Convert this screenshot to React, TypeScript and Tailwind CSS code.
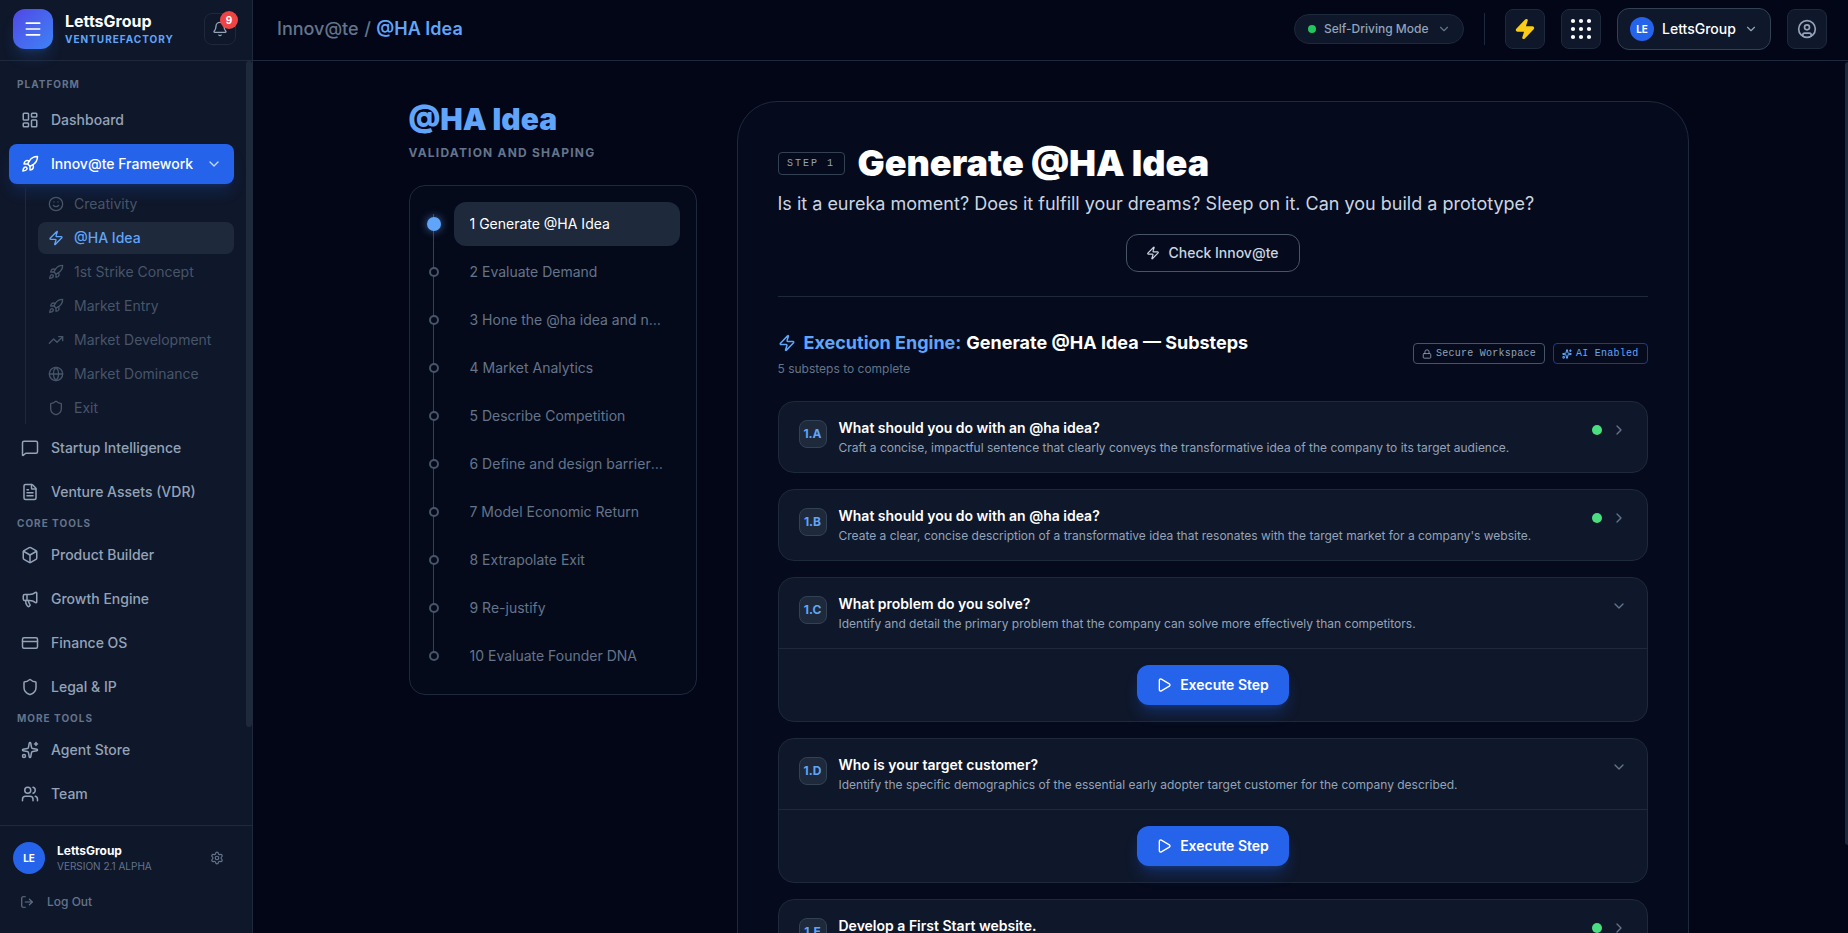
import React from "react";
import {
  LayoutDashboard, Rocket, Smile, Zap, TrendingUp, Globe, Shield, MessageSquare, FileText, Box,
  Megaphone, CreditCard, Sparkles, Users, Settings, LogOut, Bell, Menu, ChevronDown, ChevronRight,
  Play, Lock, CircleUser,
} from "lucide-react";

const sub = [
  { i: Smile, t: "Creativity" },
  { i: Zap, t: "@HA Idea", active: true },
  { i: Rocket, t: "1st Strike Concept" },
  { i: Rocket, t: "Market Entry" },
  { i: TrendingUp, t: "Market Development" },
  { i: Globe, t: "Market Dominance" },
  { i: Shield, t: "Exit" },
];

const steps = [
  "1 Generate @HA Idea", "2 Evaluate Demand", "3 Hone the @ha idea and name", "4 Market Analytics",
  "5 Describe Competition", "6 Define and design barriers to entry", "7 Model Economic Return",
  "8 Extrapolate Exit", "9 Re-justify", "10 Evaluate Founder DNA",
];

const cards = [
  { id: "1.A", t: "What should you do with an @ha idea?", d: "Craft a concise, impactful sentence that clearly conveys the transformative idea of the company to its target audience.", done: true },
  { id: "1.B", t: "What should you do with an @ha idea?", d: "Create a clear, concise description of a transformative idea that resonates with the target market for a company's website.", done: true },
  { id: "1.C", t: "What problem do you solve?", d: "Identify and detail the primary problem that the company can solve more effectively than competitors.", done: false },
  { id: "1.D", t: "Who is your target customer?", d: "Identify the specific demographics of the essential early adopter target customer for the company described.", done: false },
  { id: "1.E", t: "Develop a First Start website.", d: "Build a simple website that presents the idea to the first customers.", done: true },
];

function NavItem({ icon: I, label }: { icon: React.ElementType; label: string }) {
  return (
    <div className="flex h-10 shrink-0 items-center gap-3 rounded-lg px-3 text-sm font-medium text-[#94a3b8]">
      <I size={18} strokeWidth={2} />
      <span>{label}</span>
    </div>
  );
}

function SectionLabel({ children }: { children: React.ReactNode }) {
  return <div className="flex h-[15px] items-center px-2 text-[10px] font-bold tracking-[0.1em] text-[#64748b]">{children}</div>;
}

function Sidebar() {
  return (
    <aside className="flex h-full w-[253px] shrink-0 flex-col border-r border-[#1e293b] bg-[#0f172a]">
      <div className="flex h-[61px] shrink-0 items-center border-b border-[#1e293b] pb-[2px] pl-[13px] pr-4">
        <div className="flex h-10 w-10 items-center justify-center rounded-xl bg-gradient-to-br from-[#4f46e5] to-[#3b82f6] text-white shadow-lg shadow-[#3b82f6]/20">
          <Menu size={20} />
        </div>
        <div className="ml-3 flex-1 leading-none">
          <div className="text-base leading-5 font-bold text-white">LettsGroup</div>
          <div className="text-[10px] leading-4 font-bold tracking-[0.1em] text-[#60a5fa]">VENTUREFACTORY</div>
        </div>
        <div className="relative flex h-8 w-8 items-center justify-center rounded-lg border border-[#1e293b] text-[#94a3b8]">
          <Bell size={16} />
          <span className="absolute -top-[3px] -right-[3px] flex h-[18px] w-[18px] items-center justify-center rounded-full bg-[#ef4444] text-[10px] font-bold text-white">9</span>
        </div>
      </div>
      <div className="relative min-h-0 flex-1 overflow-hidden">
        <div className="absolute top-0 right-0 bottom-[98px] w-[6px] rounded-full bg-[#1e293b]" />
        <nav className="flex flex-col gap-1 pt-[16px] pl-[9px] pr-[18px]">
          <div className="mb-1"><SectionLabel>PLATFORM</SectionLabel></div>
          <NavItem icon={LayoutDashboard} label="Dashboard" />
          <div className="flex h-10 items-center gap-3 rounded-lg bg-[#2563eb] px-3 text-sm font-medium text-white shadow-lg shadow-[#2563eb]/20">
            <Rocket size={18} />
            <span className="flex-1">Innov@te Framework</span>
            <ChevronDown size={16} className="text-[#bfdbfe]" />
          </div>
          <div className="ml-4 flex flex-col gap-[2px] border-l border-[#1e293b] pl-3">
            {sub.map((s) => (
              <div key={s.t} className={`flex h-8 items-center gap-[10px] rounded-lg px-[10px] text-sm ${s.active ? "bg-[#1e293b] font-medium text-[#60a5fa]" : "text-[#475569]"}`}>
                <s.i size={16} />
                <span>{s.t}</span>
              </div>
            ))}
          </div>
          <NavItem icon={MessageSquare} label="Startup Intelligence" />
          <NavItem icon={FileText} label="Venture Assets (VDR)" />
          <SectionLabel>CORE TOOLS</SectionLabel>
          <NavItem icon={Box} label="Product Builder" />
          <NavItem icon={Megaphone} label="Growth Engine" />
          <NavItem icon={CreditCard} label="Finance OS" />
          <NavItem icon={Shield} label="Legal & IP" />
          <SectionLabel>MORE TOOLS</SectionLabel>
          <NavItem icon={Sparkles} label="Agent Store" />
          <NavItem icon={Users} label="Team" />
        </nav>
      </div>
      <div className="h-[108px] shrink-0 border-t border-[#1e293b] pl-[13px] pr-4 pt-4">
        <div className="flex h-8 items-center">
          <div className="flex h-8 w-8 items-center justify-center rounded-full bg-[#2563eb] text-[10px] font-bold text-white">LE</div>
          <div className="ml-3 flex-1">
            <div className="text-xs leading-4 font-bold text-white">LettsGroup</div>
            <div className="text-[10px] leading-[14px] text-[#64748b]">VERSION 2.1 ALPHA</div>
          </div>
          <Settings size={14} className="mr-3 text-[#64748b]" />
        </div>
        <div className="mt-[18px] flex h-5 items-center gap-[13px] pl-[7px] text-xs font-medium text-[#64748b]">
          <LogOut size={14} />
          <span>Log Out</span>
        </div>
      </div>
    </aside>
  );
}

function TopBar() {
  return (
    <header className="flex h-[61px] shrink-0 items-center border-b border-[#1e293b] bg-[#020617] pb-[2px] pl-6 pr-[21px]">
      <div className="flex-1 text-lg font-medium text-[#64748b]">
        Innov@te<span className="mx-[5.5px]">/</span><span className="font-semibold text-[#60a5fa]">@HA Idea</span>
      </div>
      <div className="flex h-[30px] w-[170px] items-center gap-2 rounded-full border border-[#1e293b] bg-[#0f172a] px-[13px] text-xs font-medium whitespace-nowrap text-[#94a3b8]">
        <span className="h-2 w-2 shrink-0 rounded-full bg-[#22c55e]" />
        <span className="flex-1">Self-Driving Mode</span>
        <ChevronDown size={14} className="shrink-0 text-[#64748b]" />
      </div>
      <div className="mx-5 h-8 w-px bg-[#1e293b]" />
      <div className="flex h-10 w-10 items-center justify-center rounded-lg border border-[#1e293b] bg-[#0f172a]">
        <Zap size={22} className="fill-[#facc15] text-[#facc15]" />
      </div>
      <div className="ml-4 flex h-10 w-10 items-center justify-center rounded-lg border border-[#1e293b] bg-[#0f172a]">
        <svg width="22" height="22" viewBox="0 0 22 22" fill="white">
          {[3, 11, 19].flatMap((y) => [3, 11, 19].map((x) => <circle key={`${x}-${y}`} cx={x} cy={y} r="2.1" />))}
        </svg>
      </div>
      <div className="ml-4 flex h-[42px] w-[154px] items-center rounded-xl border border-[#334155] bg-[#0f172a] pl-3 pr-3">
        <div className="flex h-6 w-6 items-center justify-center rounded-full bg-[#2563eb] text-[10px] font-bold text-white">LE</div>
        <span className="ml-2 flex-1 text-sm font-medium text-white">LettsGroup</span>
        <ChevronDown size={14} className="text-[#94a3b8]" />
      </div>
      <div className="ml-4 flex h-10 w-10 items-center justify-center rounded-lg border border-[#1e293b] bg-[#0f172a] text-[#94a3b8]">
        <CircleUser size={20} />
      </div>
    </header>
  );
}

function StepsPanel() {
  return (
    <div className="w-[288px] shrink-0">
      <h2 className="text-3xl leading-9 font-black text-[#60a5fa]">@HA Idea</h2>
      <p className="mt-2 text-xs leading-4 font-bold tracking-widest text-[#64748b]">VALIDATION AND SHAPING</p>
      <div className="relative mt-6 rounded-2xl border border-[#1e293b] bg-[#050a1a] p-4">
        <div className="absolute top-[28px] bottom-[38px] left-[23px] w-px bg-[#334155]" />
        <div className="flex flex-col gap-1">
          {steps.map((s, i) => (
            <div key={s} className="flex items-center gap-3">
              <div className="relative flex w-4 justify-center">
                {i === 0 ? (
                  <span className="h-[14px] w-[14px] rounded-full bg-[#60a5fa] shadow-[0_0_8px_rgba(96,165,250,0.6)]" />
                ) : (
                  <span className="h-[10px] w-[10px] rounded-full border-2 border-[#475569] bg-[#050a1a]" />
                )}
              </div>
              <div className={`flex h-11 min-w-0 flex-1 items-center rounded-xl px-4 text-sm ${i === 0 ? "bg-[#1e293b] text-white" : "text-[#64748b]"}`}>
                <span className="truncate">{s}</span>
              </div>
            </div>
          ))}
        </div>
      </div>
    </div>
  );
}

function SubCard({ c }: { c: (typeof cards)[number] }) {
  return (
    <div className="rounded-2xl border border-[#1e293b] bg-[#0f172a]">
      <div className="flex items-start gap-3 px-5 py-4">
        <div className="mt-0.5 flex h-7 w-7 shrink-0 items-center justify-center rounded-lg border border-[#334155] bg-[#1e293b] text-xs font-bold text-[#60a5fa]">{c.id}</div>
        <div className="min-w-0 flex-1">
          <div className="text-sm leading-5 font-semibold text-white">{c.t}</div>
          <div className="mt-[2px] text-xs leading-4 text-[#94a3b8]">{c.d}</div>
        </div>
        <div className="mt-1 flex items-center gap-[9px]">
          {c.done && <span className="h-[10px] w-[10px] rounded-full bg-[#4ade80]" />}
          {c.done ? <ChevronRight size={16} className="text-[#64748b]" /> : <ChevronDown size={16} className="text-[#64748b]" />}
        </div>
      </div>
      {!c.done && (
        <div className="flex justify-center border-t border-[#1e293b] p-4">
          <div className="flex h-10 w-[152px] items-center justify-center gap-2 rounded-xl bg-[#2563eb] text-sm font-semibold text-white shadow-lg shadow-[#2563eb]/30">
            <Play size={16} />
            Execute Step
          </div>
        </div>
      )}
    </div>
  );
}

function MainCard() {
  return (
    <div className="min-w-0 flex-1 rounded-[40px] border border-[#1e293b] bg-[#050b1c] p-10">
      <div className="flex h-[42px] items-center gap-[13px]">
        <span className="flex h-[23px] w-[67px] items-center justify-center rounded border border-[#334155] font-['Liberation_Mono',monospace] text-[10px] tracking-[0.2em] text-[#94a3b8]">STEP 1</span>
        <h1 className="text-4xl font-black text-white">Generate @HA Idea</h1>
      </div>
      <p className="mt-[6px] text-lg leading-7 text-[#cbd5e1]">Is it a eureka moment? Does it fulfill your dreams? Sleep on it. Can you build a prototype?</p>
      <div className="mt-[16px] flex justify-center">
        <div className="flex h-[38px] w-[174px] items-center justify-center gap-2 rounded-xl border border-[#475569] text-sm font-medium text-[#cbd5e1]">
          <Zap size={14} />
          Check Innov@te
        </div>
      </div>
      <div className="mt-6 h-px bg-[#1e293b]" />
      <div className="mt-8 flex items-start justify-between">
        <div>
          <div className="flex items-center gap-2 text-lg leading-7 font-bold">
            <Zap size={18} className="text-[#60a5fa]" />
            <span className="text-[#60a5fa]">Execution Engine:</span>
            <span className="-ml-[3px] text-white">Generate @HA Idea — Substeps</span>
          </div>
          <p className="mt-1 text-xs leading-4 text-[#64748b]">5 substeps to complete</p>
        </div>
        <div className="mt-[14px] flex gap-2">
          <span className="flex h-[21px] items-center gap-1 rounded border border-[#475569] px-2 font-['Liberation_Mono',monospace] text-[10px] tracking-wide text-[#94a3b8]"><Lock size={10} />Secure Workspace</span>
          <span className="flex h-[21px] items-center gap-1 rounded border border-[#1e3a8a] px-2 font-['Liberation_Mono',monospace] text-[10px] tracking-wide text-[#60a5fa]"><Sparkles size={10} strokeWidth={2.5} />AI Enabled</span>
        </div>
      </div>
      <div className="mt-[24px] flex flex-col gap-4">
        {cards.map((c) => <SubCard key={c.id} c={c} />)}
      </div>
    </div>
  );
}

export default function App() {
  return (
    <div className="flex h-[933px] w-full overflow-hidden bg-[#020617] font-['Inter',sans-serif]">
      <Sidebar />
      <div className="relative flex min-w-0 flex-1 flex-col">
        <TopBar />
        <main className="min-h-0 flex-1 overflow-hidden pt-10 pr-1">
          <div className="mx-auto flex w-[1280px] items-start gap-10">
            <StepsPanel />
            <MainCard />
          </div>
        </main>
        <div className="absolute top-[62px] right-0 h-[783px] w-[3px] rounded-l-full bg-[#1e293b]" />
      </div>
    </div>
  );
}
